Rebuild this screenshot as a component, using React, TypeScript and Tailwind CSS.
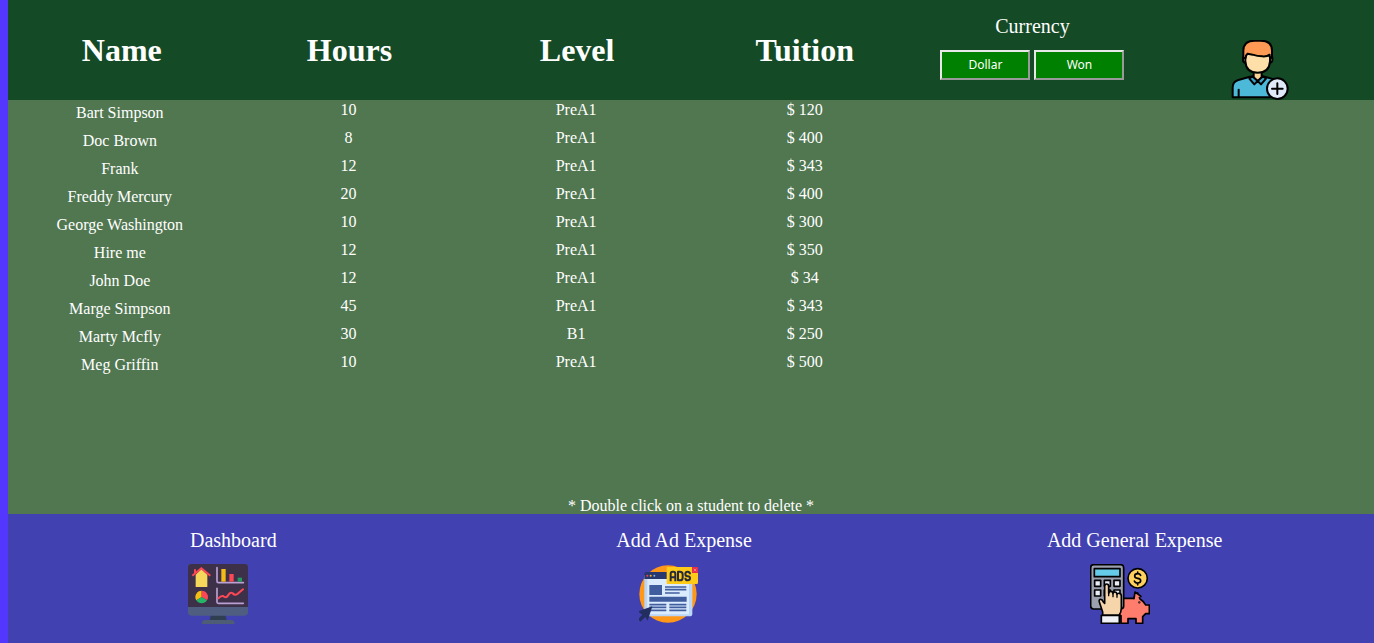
import React from "react";

type Student = { name: string; hours: number; level: string; tuition: number };

const students: Student[] = [
  { name: "Bart Simpson", hours: 10, level: "PreA1", tuition: 120 },
  { name: "Doc Brown", hours: 8, level: "PreA1", tuition: 400 },
  { name: "Frank", hours: 12, level: "PreA1", tuition: 343 },
  { name: "Freddy Mercury", hours: 20, level: "PreA1", tuition: 400 },
  { name: "George Washington", hours: 10, level: "PreA1", tuition: 300 },
  { name: "Hire me", hours: 12, level: "PreA1", tuition: 350 },
  { name: "John Doe", hours: 12, level: "PreA1", tuition: 34 },
  { name: "Marge Simpson", hours: 45, level: "PreA1", tuition: 343 },
  { name: "Marty Mcfly", hours: 30, level: "B1", tuition: 250 },
  { name: "Meg Griffin", hours: 10, level: "PreA1", tuition: 500 },
];

function AddStudentIcon() {
  return (
    <svg viewBox="30 30 180 180" className="block size-[60px]" aria-hidden="true">
      <g stroke="#000" strokeWidth="6" strokeLinejoin="round" strokeLinecap="round">
        <path d="M38 202V172q0-17 17-22l35-10h44l35 10q17 5 17 22v30Z" fill="#4cb9d9" />
        <path d="M101 122v20l12 12 12-12v-20Z" fill="#fbd295" />
        <path d="M97 139l-9 7 15 17 10-10 10 10 15-17-9-7-16 14Z" fill="#3aa4c8" />
        <path d="M74 82h-5v10q1 6 8 6M152 82h5v10q-1 6-8 6" fill="#fbd295" />
        <path d="M76 70v24q2 34 37 34t37-34V70Z" fill="#ffdfa9" />
        <path d="M70 84V62q0-30 34-30h18q34 0 34 30v22l-7-4V74q-8 6-22 5-15 0-29-5l-15-3q-6 4-6 13Z" fill="#ff9a54" />
        <path d="M56 179v22" fill="none" />
        <circle cx="172" cy="176" r="31" fill="#dfe9fa" />
        <path d="M172 160v32M156 176h32" fill="none" />
      </g>
    </svg>
  );
}

function DashboardIcon() {
  return (
    <svg viewBox="30 27 180 180" className="block size-[60px]" aria-hidden="true">
      <path d="M99 180h43l5 18H94Z" fill="#2f3e50" />
      <path d="M71 207q0-12 11-12h77q11 0 11 12Z" fill="#4e5d75" />
      <rect x="30" y="27" width="180" height="155" rx="10" fill="#4e5d80" />
      <path d="M30 156V37q0-10 10-10h160q10 0 10 10v119Z" fill="#3d3149" />
      <path d="M53 59l17-16 18 16v37H53Z" fill="#f4d75b" />
      <path d="M43 62l27-22 27 22M51 55V43" fill="none" stroke="#fd4755" strokeWidth="6" />
      <path d="M117 38v41q0 4 4 4h75M117 100v41q0 4 4 4h75" fill="none" stroke="#bba0d4" strokeWidth="5" strokeLinecap="round" />
      <path d="M130 42h13v38h-13Z" fill="#f6bc16" />
      <path d="M154 57h13v23h-13Z" fill="#fd4755" />
      <path d="M179 68h13v12h-13Z" fill="#209b61" />
      <path d="M71 126V107a19 19 0 0 0-16 29Z" fill="#f6bc16" />
      <path d="M71 126V107a19 19 0 0 1 16 29Z" fill="#fd4755" />
      <path d="M71 126l16 10a19 19 0 0 1-32 0Z" fill="#25b567" />
      <path d="M121 130q8-9 14-7 8 7 14 0 7-13 14-9 8 9 15 3l17-14" fill="none" stroke="#fd4755" strokeWidth="6" strokeLinecap="round" />
    </svg>
  );
}

function AdsIcon() {
  return (
    <svg viewBox="30 27 180 180" className="block size-[60px]" aria-hidden="true">
      <circle cx="117" cy="117" r="86" fill="#ff9819" />
      <path d="M46 61h144v115q0 8-8 8H54q-8 0-8-8Z" fill="#b9d5f8" />
      <path d="M55 72h125v106H55Z" fill="#dcecff" />
      <path d="M46 72V58q0-7 7-7h70v21Z" fill="#29376f" />
      <circle cx="55" cy="62" r="3" fill="#e94653" />
      <circle cx="65" cy="62" r="3" fill="#ffaf25" />
      <circle cx="76" cy="62" r="3" fill="#7eb5dc" />
      <path d="M61 90h38v30H61Z" fill="#405e9e" />
      <path d="M61 125h112v15H61Z" fill="#405e9e" />
      <path d="M108 96h64M108 104h64M108 114h44M61 149h51M61 157h51M61 166h51M121 149h51M121 157h51M121 166h51" stroke="#405e9e" strokeWidth="5" />
      <path d="M113 36h94v47q0 4-4 4h-90Z" fill="#ffcb18" />
      <path d="M189 36h18v18h-18Z" fill="#e52e4b" />
      <path d="M194 41l8 8M202 41l-8 8" stroke="#ffa0a8" strokeWidth="2" />
      <g fill="none" stroke="#252b39" strokeWidth="6" strokeLinejoin="round">
        <path d="M125 79V56q0-6 6-6h2q6 0 6 6v23M125 67h14" />
        <path d="M147 50v26h6q8 0 8-8V58q0-8-8-8Z" />
        <path d="M183 58q0-8-7-8t-7 7 7 7 7 6-7 6-7-8" />
      </g>
      <path d="M70 154L26 169l14 10-13 14 7 7 15-14 7 11Z" fill="#222e60" />
    </svg>
  );
}

function ExpenseIcon() {
  return (
    <svg viewBox="30 27 180 180" className="block size-[60px]" aria-hidden="true">
      <g stroke="#000" strokeWidth="5" strokeLinejoin="round" strokeLinecap="round">
        <path d="M111 144l18-14h31l13-16 7 18q13 8 17 18h11v26h-11l-9 9v20h-20v-14h-24v14h-21v-23l-12-7Z" fill="#ff7d6c" />
        <path d="M162 131l3-20 18 13" fill="#ff7d6c" />
        <circle cx="178" cy="142" r="1" />
        <rect x="32" y="29" width="99" height="133" rx="9" fill="#9b9fae" />
        <rect x="43" y="41" width="77" height="24" fill="#66cbe9" />
        <path d="M44 76h18v18H44ZM73 76h18v18H73ZM102 76h18v18h-18ZM44 105h18v18H44ZM73 105h18v18H73ZM102 105h18v18h-18Z" fill="#e9edf5" />
        <path d="M68 181v-10l-10-30q-2-8 4-8 5 0 8 8l4 4V94q0-7 6-7t6 7v21q1-6 7-6t6 7q1-5 6-5t6 7q2-4 7-3 6 1 6 8v36q0 14-7 22Z" fill="#f7d5ab" />
        <path d="M86 115v7M99 118v7M111 120v7" fill="none" strokeWidth="4" />
        <path d="M64 181h54v24H64Z" fill="#eff1f7" />
        <circle cx="173" cy="70" r="29" fill="#ffd15d" />
        <path d="M182 61q-2-5-9-5-9 0-9 7 0 6 9 7t9 7-9 7q-8 0-10-6M173 51v5M173 84v5" fill="none" />
      </g>
    </svg>
  );
}

const actions = [
  { label: "Dashboard", Icon: DashboardIcon },
  { label: "Add Ad Expense", Icon: AdsIcon },
  { label: "Add General Expense", Icon: ExpenseIcon },
];

const currencyButton =
  "h-[30px] w-[90px] border-2 border-t-[#e8e8e8] border-l-[#e8e8e8] border-r-[#999999] border-b-[#999999] bg-[#008000] font-['Noto_Sans',sans-serif] text-xs leading-4";

export default function App() {
  return (
    <div className="flex min-h-screen flex-col border-l-8 border-[#5337ff] bg-[#517751] font-['Liberation_Serif',serif] text-base text-white">
      <main className="flex grow flex-col">
        <table className="w-full table-fixed border-collapse text-center">
          <thead className="bg-[#144b26]">
            <tr className="h-[100px]">
              {["Name", "Hours", "Level", "Tuition"].map((title) => (
                <th key={title} scope="col" className="p-0 text-center text-[32px] leading-9 font-bold">
                  {title}
                </th>
              ))}
              <td className="p-0 pt-[14px] align-top">
                <p className="text-xl leading-6">Currency</p>
                <div className="mt-3 flex justify-center gap-1">
                  <button type="button" className={currencyButton}>Dollar</button>
                  <button type="button" className={currencyButton}>Won</button>
                </div>
              </td>
              <td className="p-0 align-bottom">
                <div className="flex justify-center">
                  <button type="button" aria-label="Add student">
                    <AddStudentIcon />
                  </button>
                </div>
              </td>
            </tr>
          </thead>
          <tbody>
            {students.map((s) => (
              <tr key={s.name} className="h-7 align-top leading-5">
                <td className="pt-[3px] pr-1">{s.name}</td>
                <td className="pr-0.5">{s.hours}</td>
                <td className="pr-0.5">{s.level}</td>
                <td>$ {s.tuition}</td>
                <td />
                <td />
              </tr>
            ))}
          </tbody>
        </table>
        <p className="mt-auto text-center leading-4">* Double click on a student to delete *</p>
      </main>
      <footer className="grid grid-cols-3 bg-[#4141b1] pt-[14px] pr-[14px] pb-[19px]">
        {actions.map(({ label, Icon }) => (
          <a key={label} href="#" className="flex flex-col items-center gap-3">
            <span className="text-xl leading-6">{label}</span>
            <span className="pr-[30px]">
              <Icon />
            </span>
          </a>
        ))}
      </footer>
    </div>
  );
}
